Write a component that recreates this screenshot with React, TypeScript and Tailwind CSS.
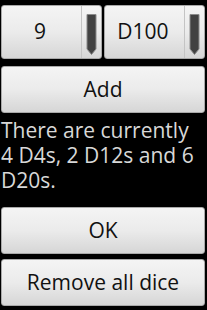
import React from "react";

const font = { fontFamily: '"Open Sans", "DejaVu Sans", sans-serif' };

function Arrow() {
  return (
    <svg width="11" height="42" viewBox="0 0 11 42" className="block">
      <polygon
        points="1,0.5 10,0.5 10,35 5.5,40.5 1,35"
        fill="#424242"
        stroke="#8a8a8a"
        strokeWidth="1"
      />
    </svg>
  );
}

function Spinner({ value }: { value: string }) {
  return (
    <div className="flex h-[54px] flex-1 overflow-hidden rounded-[3px] border border-[#a9a9a9] bg-gradient-to-b from-[#f4f4f4] via-[#ebebeb] to-[#d6d6d6]">
      <div className="flex flex-1 items-center justify-center pr-[3px] text-[21px] text-[#111]">
        {value}
      </div>
      <div className="flex w-[20px] justify-center border-l border-[#c4c4c4] pt-[8px]">
        <Arrow />
      </div>
    </div>
  );
}

function Button({ label }: { label: string }) {
  return (
    <button className="flex h-[47px] w-full items-center justify-center rounded-[3px] border border-[#a9a9a9] bg-gradient-to-b from-[#f4f4f4] via-[#ebebeb] to-[#d6d6d6] text-[21px] text-[#111]">
      {label}
    </button>
  );
}

export default function App() {
  return (
    <div className="h-[310px] w-[207px] overflow-hidden bg-black pl-[1px] pr-[2px] pt-[5px]" style={font}>
      <div className="flex gap-[2px]">
        <Spinner value="9" />
        <Spinner value="D100" />
      </div>
      <div className="mt-[7px]">
        <Button label="Add" />
      </div>
      <p className="mt-[5px] text-[21px] leading-[25px] text-[#d8d8d8]">
        There are currently 4 D4s, 2 D12s and 6 D20s.
      </p>
      <div className="mt-[14px] flex flex-col gap-[5px]">
        <Button label="OK" />
        <Button label="Remove all dice" />
      </div>
    </div>
  );
}
